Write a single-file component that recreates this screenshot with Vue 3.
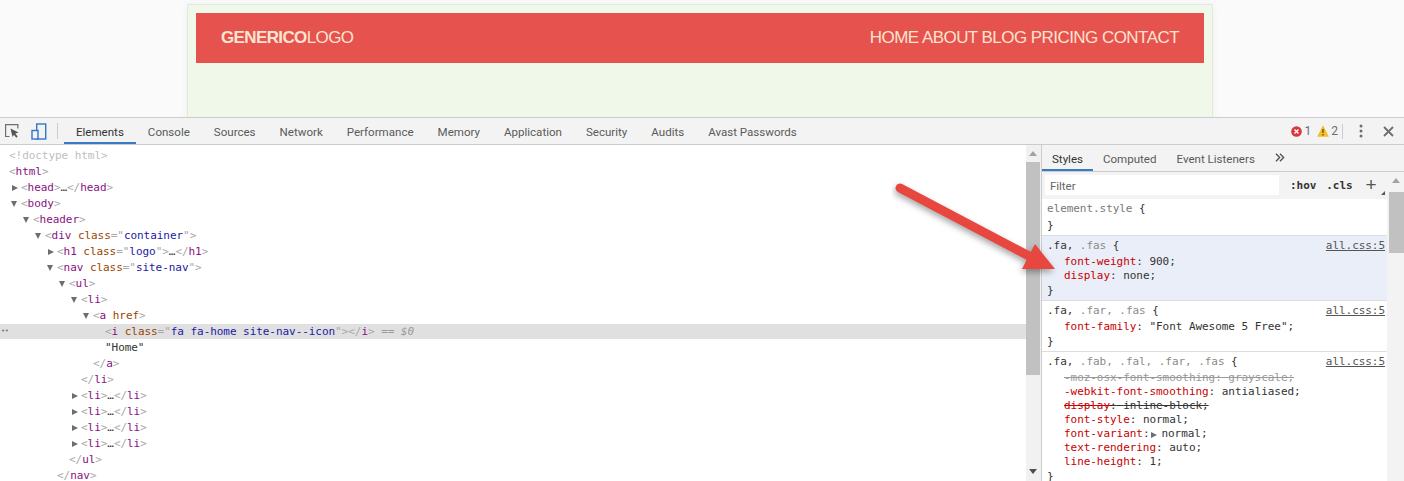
<script setup>
const tabs = ['Elements','Console','Sources','Network','Performance','Memory','Application','Security','Audits','Avast Passwords']
const sideTabs = ['Styles','Computed','Event Listeners']
const li = x => ({ x, arrow: 'right', t: [['p','<'],['t','li'],['p','>'],['x','…'],['p','</'],['t','li'],['p','>']] })
const open = (x, arrow, name, attrs = []) => ({ x, arrow, t: [['p','<'],['t',name],...attrs,['p','>']] })
const close = (x, name) => ({ x, t: [['p','</'],['t',name],['p','>']] })
const collapsed = (x, name, attrs = []) => ({ x, arrow: 'right', t: [['p','<'],['t',name],...attrs,['p','>'],['x','…'],['p','</'],['t',name],['p','>']] })
const attr = (n, v) => [['t',' '],['a',n],['p','="'],['v',v],['p','"']]
const rows = [
  { x: 9, t: [['d','<!doctype html>']] },
  open(9, null, 'html'),
  collapsed(21, 'head'),
  open(21, 'down', 'body'),
  open(33, 'down', 'header'),
  open(45, 'down', 'div', attr('class','container')),
  collapsed(57, 'h1', attr('class','logo')),
  open(57, 'down', 'nav', attr('class','site-nav')),
  open(69, 'down', 'ul'),
  open(81, 'down', 'li'),
  open(93, 'down', 'a', [['t',' '],['a','href']]),
  { x: 105, selected: true, t: [['p','<'],['t','i'],...attr('class','fa fa-home site-nav--icon'),['p','>'],['p','</'],['t','i'],['p','>'],['s',' == $0']] },
  { x: 105, t: [['x','"Home"']] },
  close(93, 'a'),
  close(81, 'li'),
  li(81), li(81), li(81), li(81),
  close(69, 'ul'),
  close(57, 'nav'),
]
const sections = [
  { sel: [['e','element.style']], props: [] },
  { sel: [['m','.fa,'],['g',' .fas']], link: true, active: true, props: [
    { n: 'font-weight', v: '900' }, { n: 'display', v: 'none' } ] },
  { sel: [['m','.fa,'],['g',' .far,'],['g',' .fas']], link: true, props: [
    { n: 'font-family', v: '"Font Awesome 5 Free"' } ] },
  { sel: [['m','.fa,'],['g',' .fab,'],['g',' .fal,'],['g',' .far,'],['g',' .fas']], link: true, props: [
    { n: '-moz-osx-font-smoothing', v: 'grayscale', faint: true },
    { n: '-webkit-font-smoothing', v: 'antialiased' },
    { n: 'display', v: 'inline-block', over: true },
    { n: 'font-style', v: 'normal' },
    { n: 'font-variant', v: 'normal', tri: true },
    { n: 'text-rendering', v: 'auto' },
    { n: 'line-height', v: '1' } ] },
]
</script>

<template>
  <div class="page">
    <section class="viewport">
      <div class="card">
        <header class="hero">
          <div class="logo"><b>GENERICO</b>LOGO</div>
          <nav class="site-nav">HOME ABOUT BLOG PRICING CONTACT</nav>
        </header>
      </div>
    </section>

    <section class="devtools">
      <div class="toolbar">
        <svg class="tool" width="14" height="14" viewBox="0 0 14 14">
          <path d="M4.5 12.5H.6V.6h12.3v4" fill="none" stroke="#6e6e6e" stroke-width="1.2"/>
          <path d="M5.5 4.5l8 4-3.2 1 2.4 3-1.4 1.2-2.4-3L7.5 13z" fill="#555"/>
        </svg>
        <svg class="tool device" width="16" height="17" viewBox="0 0 16 17">
          <rect x="5.7" y="1" width="9" height="15" fill="none" stroke="#2f78c9" stroke-width="1.4"/>
          <rect x="1" y="7.5" width="6" height="8.5" fill="#f3f3f3" stroke="#2f78c9" stroke-width="1.4"/>
        </svg>
        <span class="sep"></span>
        <div class="tabs">
          <span v-for="(t, i) in tabs" :key="t" class="tab" :class="{ on: i === 0 }">{{ t }}</span>
        </div>
        <div class="status">
          <svg width="11" height="11" viewBox="0 0 12 12">
            <circle cx="6" cy="6" r="5.8" fill="#d9363e"/>
            <path d="M3.8 3.8l4.4 4.4M8.2 3.8l-4.4 4.4" stroke="#fff" stroke-width="1.5"/>
          </svg>
          <span class="count">1</span>
          <svg class="warn" width="12" height="12" viewBox="0 0 12 12">
            <path d="M6 .3L11.9 11.7H.1z" fill="#f4bd2a"/>
            <path d="M6 4v4M6 9v1.4" stroke="#5a4300" stroke-width="1.2"/>
          </svg>
          <span class="count two">2</span>
          <span class="sep short"></span>
          <svg class="kebab" width="4" height="14" viewBox="0 0 4 14">
            <circle cx="2" cy="2" r="1.5" fill="#6e6e6e"/><circle cx="2" cy="7" r="1.5" fill="#6e6e6e"/><circle cx="2" cy="12" r="1.5" fill="#6e6e6e"/>
          </svg>
          <svg class="close" width="11" height="11" viewBox="0 0 11 11">
            <path d="M1 1l9 9M10 1l-9 9" stroke="#6e6e6e" stroke-width="1.8"/>
          </svg>
        </div>
      </div>

      <div class="panes">
        <div class="tree">
          <div v-for="(r, i) in rows" :key="i" class="row" :class="{ selected: r.selected }" :style="{ paddingLeft: r.x - 9 + 'px' }">
            <span v-if="r.selected" class="dots">••</span>
            <span class="tw"><i v-if="r.arrow" :class="r.arrow"></i></span>
            <span v-for="(k, j) in r.t" :key="j" :class="k[0]">{{ k[1] }}</span>
          </div>
        </div>
        <div class="scroll left">
          <span class="up"></span>
          <span class="thumb"></span>
          <span class="fill"></span>
          <span class="down"></span>
        </div>

        <aside class="sidebar">
          <div class="side-tabs">
            <span v-for="(t, i) in sideTabs" :key="t" class="stab" :class="{ on: i === 0 }">{{ t }}</span>
            <svg class="more" width="10" height="9" viewBox="0 0 10 9">
              <path d="M1 .8L4.6 4.5 1 8.2M5 .8L8.6 4.5 5 8.2" fill="none" stroke="#555" stroke-width="1.4"/>
            </svg>
          </div>
          <div class="side-body">
            <div class="styles">
              <div class="filter">
                <div class="input">Filter</div>
                <span class="fbtn hov">:hov</span>
                <span class="fbtn cls">.cls</span>
                <span class="plus">+</span>
              </div>
              <div v-for="(s, i) in sections" :key="i" class="rule" :class="{ active: s.active }">
                <div class="head sel">
                  <span><span v-for="(k, j) in s.sel" :key="j" :class="k[0]">{{ k[1] }}</span> {</span>
                  <span v-if="s.link" class="link">all.css:5</span>
                </div>
                <div v-for="p in s.props" :key="p.n" class="prop">
                  <span :class="{ faint: p.faint, over: p.over }"><span class="pn">{{ p.n }}</span>:<i v-if="p.tri" class="right tri"></i><template v-if="!p.tri">{{ ' ' }}</template>{{ p.v }};</span>
                </div>
                <div class="head end">}</div>
              </div>
            </div>
            <div class="scroll right-bar">
              <span class="up"></span>
              <span class="thumb"></span>
            </div>
          </div>
        </aside>
      </div>
    </section>

    <svg class="callout" width="180" height="110" viewBox="0 0 180 110">
      <g class="callout-g">
        <line x1="8" y1="8" x2="137" y2="76" stroke="#e8473f" stroke-width="9" stroke-linecap="round"/>
        <polygon points="143,64 163,89 130,89" fill="#e8473f"/>
      </g>
    </svg>
  </div>
</template>

<style>
html, body { margin: 0; background: #fff; }
</style>

<style scoped>
.page { position: relative; width: 1404px; height: 481px; overflow: hidden; display: flex; flex-direction: column; font-family: Roboto, "Liberation Sans", sans-serif; }
.viewport { height: 117px; flex: none; background: #fafafa; overflow: hidden; padding-left: 187px; box-sizing: border-box; }
.card { width: 1026px; height: 140px; margin-top: 4px; box-sizing: border-box; padding: 8px; background: #f0f8ea; border: 1px solid #e4e8e0; box-shadow: 0 0 8px rgba(0,0,0,.04); }
.hero { height: 50px; background: #e6524e; color: #fbe4d0; display: flex; align-items: center; justify-content: space-between; padding: 0 25px; font-family: "Liberation Sans", Arial, sans-serif; font-size: 17px; }
.logo { letter-spacing: -.62px; }
.site-nav { letter-spacing: -.55px; }
.logo b { font-weight: 700; }

.devtools { flex: 1; min-height: 0; border-top: 1px solid #ccc; display: flex; flex-direction: column; }
.toolbar { height: 26px; flex: none; background: #f3f3f3; border-bottom: 1px solid #ccc; display: flex; align-items: center; }
.tool { margin-left: 5px; flex: none; }
.device { margin-left: 12px; }
.sep { width: 1px; height: 16px; background: #ccc; margin-left: 10px; flex: none; }
.tabs { display: flex; height: 100%; margin-left: 6px; }
.tab { padding: 0 12px; line-height: 28px; height: 26px; box-sizing: border-box; font-size: 11.55px; color: #5a5a5a; white-space: nowrap; }
.tab.on { color: #333; border-bottom: 2px solid #3b78c6; }
.status { margin-left: auto; display: flex; align-items: center; padding-right: 10px; }
.count { font-size: 12px; color: #6e6e6e; margin-left: 3px; }
.count.two { margin-left: 2px; }
.warn { margin-left: 6px; }
.sep.short { margin-left: 4px; height: 15px; }
.kebab { margin-left: 16px; }
.close { margin-left: 20px; }

.panes { flex: 1; min-height: 0; display: flex; }
.tree { width: 1026px; flex: none; background: #fff; padding-top: 3px; box-sizing: border-box; font-family: "DejaVu Sans Mono", monospace; font-size: 11px; letter-spacing: -.05px; color: #222; }
.row { position: relative; height: 16px; line-height: 16px; display: flex; white-space: pre; box-sizing: border-box; }
.row.selected { background: #e0e0e0; height: 15px; margin-bottom: 1px; line-height: 15px; }
.dots { position: absolute; left: 1px; top: 0; font-size: 7px; color: #777; letter-spacing: -.5px; }
.tw { width: 9px; flex: none; display: flex; align-items: center; }
.tw i { display: block; }
.tw .down { margin-left: -1px; }
.right { width: 0; height: 0; border-left: 6px solid #6e6e6e; border-top: 3.5px solid transparent; border-bottom: 3.5px solid transparent; }
.down { width: 0; height: 0; border-top: 6px solid #6e6e6e; border-left: 3.5px solid transparent; border-right: 3.5px solid transparent; }
.p { color: #a8a8a8; }
.t { color: #881280; }
.a { color: #994500; }
.v { color: #1a1aa6; }
.x { color: #333; }
.d { color: #c0c0c0; }
.s { color: #999; font-style: italic; }

.scroll { width: 15px; flex: none; background: #f1f1f1; display: flex; flex-direction: column; align-items: stretch; box-sizing: border-box; }
.scroll .up { height: 17px; flex: none; position: relative; }
.scroll .up::after { content: ""; position: absolute; left: 3px; top: 6px; border-bottom: 5px solid #a3a3a3; border-left: 4px solid transparent; border-right: 4px solid transparent; }
.scroll .thumb { background: #c1c1c1; flex: none; height: 213px; }
.scroll .fill { flex: 1; }
.scroll .down { height: 17px; flex: none; position: relative; width: auto; border: 0; }
.scroll .down::after { content: ""; position: absolute; left: 3px; top: 5px; border-top: 5px solid #505050; border-left: 4px solid transparent; border-right: 4px solid transparent; }
.left { padding-right: 1px; }

.sidebar { flex: 1; min-width: 0; border-left: 1px solid #ccc; display: flex; flex-direction: column; background: #f3f3f3; }
.side-tabs { height: 26px; flex: none; display: flex; border-bottom: 1px solid #ccc; align-items: stretch; font-size: 11.55px; color: #5a5a5a; }
.stab { padding: 0 10px; line-height: 28px; box-sizing: border-box; height: 26px; white-space: nowrap; }
.stab.on { color: #333; border-bottom: 2px solid #3b78c6; }
.more { margin-left: 10px; align-self: center; margin-top: -1px; }
.side-body { flex: 1; min-height: 0; display: flex; }
.styles { width: 345px; flex: none; font-family: "DejaVu Sans Mono", monospace; font-size: 11px; letter-spacing: -.05px; color: #222; }
.filter { height: 27px; box-sizing: border-box; padding-top: 3px; display: flex; align-items: flex-start; position: relative; background: #f3f3f3; }
.input { width: 234px; height: 20px; margin-left: 3px; background: #fff; font-family: Roboto, sans-serif; font-size: 11.55px; line-height: 22px; padding-left: 5px; box-sizing: border-box; color: #666; }
.fbtn { line-height: 21px; color: #333; font-weight: 700; }
.hov { margin-left: 11px; }
.cls { margin-left: 10px; }
.plus { font-family: "Liberation Sans", sans-serif; font-size: 19px; line-height: 19px; margin-left: 13px; color: #555; position: relative; }
.plus::after { content: ""; position: absolute; right: -8px; bottom: -1px; border-bottom: 4px solid #555; border-left: 4px solid transparent; }
.rule { background: #fff; padding: 2px 2px 2px 5px; border-bottom: 1px solid #ddd; }
.rule:last-child { border-bottom: 0; }
.rule.active { background: #eaeef8; }
.head { display: flex; justify-content: space-between; white-space: pre; color: #333; }
.head.sel { height: 17px; line-height: 15px; }
.head.end { height: 15px; line-height: 15px; }
.g { color: #8a8a8a; }
.m { color: #333; }
.e { color: #777; }
.link { color: #555; text-decoration: underline; }
.prop { height: 14px; line-height: 14px; padding-left: 17px; white-space: pre; color: #333; }
.pn { color: #c80000; }
.tri { display: inline-block; margin: 0 4px 0 2px; border-left-width: 6px; vertical-align: -0.5px; }
.faint, .faint .pn { color: #999; text-decoration: line-through; }
.over { text-decoration: line-through; }
.over .pn { text-decoration: line-through; }
.right-bar { width: 17px; padding-left: 2px; background: #f3f3f3; }
.right-bar .up { height: 20px; }
.right-bar .thumb { height: 61px; }

.callout { position: absolute; left: 892px; top: 180px; pointer-events: none; }
.callout-g { filter: drop-shadow(-1px 3px 3px rgba(0,0,0,.35)); }
</style>
